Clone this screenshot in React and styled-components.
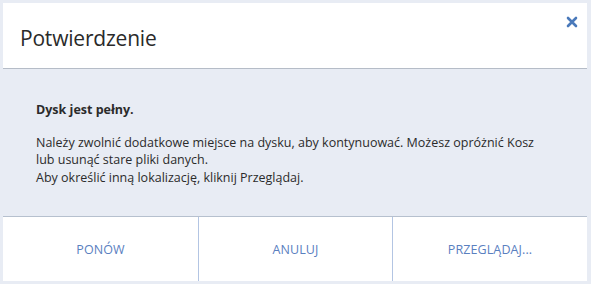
import React from 'react'
import styled, {createGlobalStyle} from 'styled-components'

//
// --- Global ---
const GlobalStyle = createGlobalStyle`
  html, body {
    margin: 0;
    padding: 0;
    background: #e8ecf4;
  }
  * {
    box-sizing: border-box;
  }
`

//
// --- Styled Components ---
const StyledDialog = styled.div`
  width: 591px;
  height: 284px;
  padding: 3px 4px 3px 3px;
  display: flex;
  flex-direction: column;
  font-family: 'Open Sans', 'Noto Sans', sans-serif;
  color: #2b2b2b;
`

const StyledHeader = styled.div`
  position: relative;
  height: 66px;
  background: #fff;
  border-bottom: 1px solid #b5bcc7;
  display: flex;
  align-items: center;
  padding-left: 17px;
  padding-top: 4px;
`

const StyledTitle = styled.h1`
  margin: 0;
  font-size: 21px;
  font-weight: 400;
  color: #2a2a2a;
  letter-spacing: -0.2px;
`

const StyledClose = styled.button`
  position: absolute;
  top: 10px;
  right: 6px;
  width: 18px;
  height: 18px;
  padding: 0;
  border: 0;
  background: transparent;
  display: flex;
  align-items: center;
  justify-content: center;
  cursor: pointer;
`

const StyledBody = styled.div`
  flex: 1;
  padding: 32px 33px 0;
  font-size: 12.5px;
  line-height: 17.5px;
`

const StyledHeading = styled.p`
  margin: 0 0 15px;
  font-weight: 700;
`

const StyledMessage = styled.p`
  margin: 0;
  white-space: nowrap;
`

const StyledFooter = styled.div`
  height: 65px;
  background: #fff;
  border-top: 1px solid #b6c0ce;
  display: grid;
  grid-template-columns: 195px 194px 1fr;
`

const StyledAction = styled.button`
  border: 0;
  border-left: ${props => (props.first ? '0' : '1px solid #b3c5e3')};
  background: transparent;
  font-family: inherit;
  font-size: 12.5px;
  color: #5a80bf;
  letter-spacing: 0.1px;
  padding: 0;
  cursor: pointer;
`

const CloseIcon = () => (
  <svg width="12" height="12" viewBox="0 0 12 12">
    <path
      d="M2 2 L10 10 M10 2 L2 10"
      stroke="#4a79ba"
      strokeWidth="2.6"
      strokeLinecap="round"
    />
  </svg>
)

//
// --- App ---
const actions = ['PONÓW', 'ANULUJ', 'PRZEGLĄDAJ...']

const App = () => (
  <>
    <GlobalStyle />
    <StyledDialog>
      <StyledHeader>
        <StyledTitle>Potwierdzenie</StyledTitle>
        <StyledClose aria-label="Zamknij">
          <CloseIcon />
        </StyledClose>
      </StyledHeader>
      <StyledBody>
        <StyledHeading>Dysk jest pełny.</StyledHeading>
        <StyledMessage>
          Należy zwolnić dodatkowe miejsce na dysku, aby kontynuować. Możesz
          opróżnić Kosz
          <br />
          lub usunąć stare pliki danych.
          <br />
          Aby określić inną lokalizację, kliknij Przeglądaj.
        </StyledMessage>
      </StyledBody>
      <StyledFooter>
        {actions.map((label, index) => (
          <StyledAction key={`action-${index}`} first={index === 0}>
            {label}
          </StyledAction>
        ))}
      </StyledFooter>
    </StyledDialog>
  </>
)

export default App
